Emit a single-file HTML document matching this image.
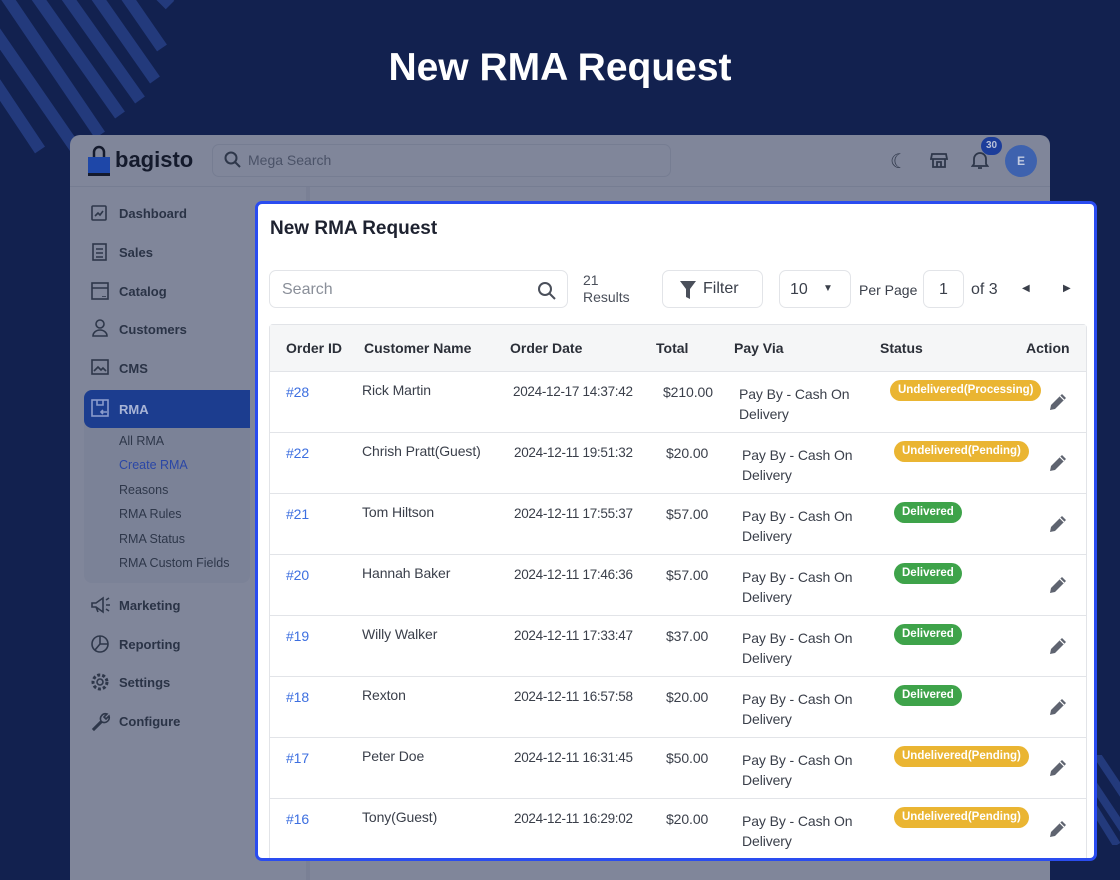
<!DOCTYPE html>
<html><head><meta charset="utf-8"><style>
*{box-sizing:border-box;margin:0;padding:0}
html,body{width:1120px;height:880px;overflow:hidden}
body{background:#12214f;font-family:"Liberation Sans",sans-serif;position:relative}
.abs{position:absolute}
h1{position:absolute;left:0;width:1120px;top:46px;text-align:center;color:#fff;font:bold 39px "Liberation Sans",sans-serif}
.panel{left:70px;top:135px;width:980px;height:745px;background:#80869a;border-radius:10px 10px 0 0;overflow:hidden}
.nav{font-size:13px;font-weight:bold;color:#2a3346}
.sub{font-size:12.5px;color:#2e374a}
.modal{left:255px;top:201px;width:842px;height:660px;background:#fff;border:3px solid #2a4cf0;border-radius:7px;overflow:hidden}
.t{font-size:14px;color:#3a3f4a;letter-spacing:-0.1px}
.hd{font-size:14px;font-weight:bold;color:#2b2f38}
.badge{position:absolute;height:21px;border-radius:11px;color:#fff;font-size:11.5px;font-weight:bold;line-height:21px;padding:0 8px;white-space:nowrap}
.y{background:#eab532}.g{background:#3ea34a}
.box{position:absolute;border:1px solid #e2e4e8;border-radius:7px;background:#fff}
</style></head><body>
<svg class="abs" style="left:0;top:0" width="320" height="170">
<g stroke="#233a7c" stroke-width="12">
<line x1="-20" y1="60" x2="40" y2="150"/><line x1="-20" y1="10" x2="80" y2="155"/><line x1="-5" y1="-20" x2="100" y2="135"/><line x1="25" y1="-20" x2="120" y2="115"/><line x1="55" y1="-20" x2="140" y2="100"/><line x1="85" y1="-20" x2="155" y2="80"/><line x1="115" y1="-20" x2="162" y2="48"/><line x1="145" y1="-20" x2="170" y2="5"/>
</g></svg>
<svg class="abs" style="left:1097px;top:755px" width="23" height="90"><g stroke="#233a7c" stroke-width="8"><line x1="0" y1="0" x2="40" y2="60"/><line x1="-10" y1="20" x2="30" y2="80"/><line x1="-5" y1="50" x2="20" y2="90"/></g></svg>
<h1>New RMA Request</h1>

<div class="abs panel">
 <svg class="abs" style="left:18px;top:10px" width="22" height="32"><path d="M6 12V7a5 5 0 0 1 10 0v5" stroke="#141a2c" stroke-width="2.5" fill="none"/><rect x="0" y="12" width="22" height="18" fill="#1e47a8"/><rect x="0" y="28" width="22" height="3" fill="#141a2c"/></svg>
 <div class="abs" style="left:45px;top:12px;font:bold 22px 'Liberation Sans',sans-serif;color:#141a2c">bagisto</div>
 <div class="abs" style="left:142px;top:9px;width:459px;height:33px;border:1px solid #767d92;border-radius:7px"></div>
 <svg class="abs" style="left:154px;top:16px" width="18" height="18"><circle cx="7" cy="7" r="5.5" stroke="#2e374a" stroke-width="2" fill="none"/><line x1="11" y1="11" x2="16" y2="16" stroke="#2e374a" stroke-width="2"/></svg>
 <div class="abs" style="left:178px;top:17px;font-size:14px;color:#4a5267">Mega Search</div>
 <div class="abs" style="left:820px;top:14px;font-size:20px;color:#2e374a">☾</div>
 <svg class="abs" style="left:860px;top:16px" width="18" height="18"><path d="M2 3h14l1 5H1zM3 8v8h12V8M7 16v-5h4v5" stroke="#2e374a" stroke-width="1.8" fill="none"/></svg>
 <svg class="abs" style="left:901px;top:15px" width="18" height="20"><path d="M3 14V9a6 6 0 0 1 12 0v5l1.5 2h-15zM7 18h4" stroke="#2e374a" stroke-width="1.8" fill="none"/></svg>
 <div class="abs" style="left:911px;top:2px;width:21px;height:18px;border-radius:9px;background:#1c3d9a;color:#b8c1d8;font-size:10px;font-weight:bold;text-align:center;line-height:18px">30</div>
 <div class="abs" style="left:935px;top:10px;width:32px;height:32px;border-radius:50%;background:#3e62ae;color:#c2cbe0;font-size:12px;font-weight:bold;text-align:center;line-height:32px">E</div>
 <div class="abs" style="left:0;top:51px;width:980px;height:1px;background:#767d92"></div>
 <div class="abs" style="left:236px;top:52px;width:4px;height:700px;background:#7a8095"></div>
 <div class="abs nav" style="left:49px;top:71px">Dashboard</div>
 <div class="abs nav" style="left:49px;top:110px">Sales</div>
 <div class="abs nav" style="left:49px;top:149px">Catalog</div>
 <div class="abs nav" style="left:49px;top:187px">Customers</div>
 <div class="abs nav" style="left:49px;top:226px">CMS</div>
 <svg class="abs" style="left:20px;top:68px" width="20" height="180" fill="none" stroke="#2e374a" stroke-width="1.6"><rect x="2" y="3" width="14" height="14" rx="1"/><path d="M5 13l3-3 2 2 3-4"/><rect x="3" y="41" width="13" height="16"/><path d="M6 46h7M6 50h7M6 54h7"/><rect x="2" y="80" width="16" height="16"/><path d="M2 85h16M13 93v1M15 93v1"/><circle cx="10" cy="121" r="4"/><path d="M3 133a7 6 0 0 1 14 0z"/><rect x="2" y="157" width="16" height="14"/><path d="M4 168l4-4 3 3 2-2 3 3"/></svg>
 <div class="abs" style="left:14px;top:255px;width:166px;height:193px;background:#7b8297;border-radius:8px"></div>
 <div class="abs" style="left:14px;top:255px;width:166px;height:38px;background:#1c3d8f;border-radius:8px 0 0 8px"></div>
 <svg class="abs" style="left:20px;top:263px" width="20" height="20" fill="none" stroke="#8a9bcc" stroke-width="1.6"><rect x="2" y="2" width="16" height="16"/><path d="M7 2v5h6V2M11 14h6M13 12l-2 2 2 2"/></svg>
 <div class="abs nav" style="left:49px;top:267px;color:#a9b5d6">RMA</div>
 <div class="abs sub" style="left:49px;top:299px">All RMA</div>
 <div class="abs sub" style="left:49px;top:323px;color:#2b47a6">Create RMA</div>
 <div class="abs sub" style="left:49px;top:348px">Reasons</div>
 <div class="abs sub" style="left:49px;top:372px">RMA Rules</div>
 <div class="abs sub" style="left:49px;top:397px">RMA Status</div>
 <div class="abs sub" style="left:49px;top:421px">RMA Custom Fields</div>
 <div class="abs nav" style="left:49px;top:463px">Marketing</div>
 <div class="abs nav" style="left:49px;top:502px">Reporting</div>
 <div class="abs nav" style="left:49px;top:540px">Settings</div>
 <div class="abs nav" style="left:49px;top:579px">Configure</div>
 <svg class="abs" style="left:20px;top:460px" width="22" height="140" fill="none" stroke="#2e374a" stroke-width="1.6"><path d="M2 8h4l7-5v14l-7-5H2zM6 12l2 5M16 5l3-2M16 10h4M16 14l3 2"/><circle cx="10" cy="49" r="8"/><path d="M10 41v8h8M10 49l-5 6"/><circle cx="10" cy="87" r="3"/><circle cx="10" cy="87" r="7" stroke-dasharray="3 2" stroke-width="3"/><path d="M3 134l8-8a5 5 0 0 1 6-7l-3 3 2 2 3-3a5 5 0 0 1-7 6l-8 8z"/></svg>
</div>

<div class="abs modal">
 <div class="abs" style="left:12px;top:14px;font-size:19px;font-weight:bold;color:#1e2230">New RMA Request</div>
 <div class="box" style="left:11px;top:66px;width:299px;height:38px"></div>
 <div class="abs" style="left:24px;top:77px;font-size:16px;color:#8a8f99">Search</div>
 <svg class="abs" style="left:279px;top:77px" width="20" height="20"><circle cx="8" cy="8" r="6" stroke="#4a4f5a" stroke-width="2" fill="none"/><line x1="12.5" y1="12.5" x2="18" y2="18" stroke="#4a4f5a" stroke-width="2"/></svg>
 <div class="abs" style="left:325px;top:68px;font-size:14px;color:#4a4f5a;line-height:17px">21<br>Results</div>
 <div class="box" style="left:404px;top:66px;width:101px;height:38px"></div>
 <svg class="abs" style="left:421px;top:76px" width="18" height="20"><path d="M1 1h16l-6 8v10l-4-2V9z" fill="#4a4f5a"/></svg>
 <div class="abs" style="left:445px;top:76px;font-size:16px;color:#3a3f4a">Filter</div>
 <div class="box" style="left:521px;top:66px;width:72px;height:38px"></div>
 <div class="abs" style="left:532px;top:77px;font-size:16px;color:#3a3f4a">10</div>
 <div class="abs" style="left:565px;top:79px;font-size:10px;color:#3a3f4a">▼</div>
 <div class="abs" style="left:601px;top:78px;font-size:14px;color:#3a3f4a">Per Page</div>
 <div class="box" style="left:665px;top:66px;width:41px;height:38px"></div>
 <div class="abs" style="left:681px;top:77px;font-size:16px;color:#3a3f4a">1</div>
 <div class="abs" style="left:713px;top:77px;font-size:16px;color:#3a3f4a">of 3</div>
 <div class="abs" style="left:764px;top:79px;font-size:10px;color:#3a3f4a">◀</div>
 <div class="abs" style="left:805px;top:79px;font-size:10px;color:#3a3f4a">▶</div>
 <div class="abs" style="left:11px;top:120px;width:818px;height:560px;border:1px solid #e2e4e8;border-radius:4px"></div>
 <div class="abs" style="left:12px;top:121px;width:816px;height:47px;background:#f5f6f7;border-bottom:1px solid #e2e4e8"></div>
 <div class="abs hd" style="left:28px;top:136px">Order ID</div>
 <div class="abs hd" style="left:106px;top:136px">Customer Name</div>
 <div class="abs hd" style="left:252px;top:136px">Order Date</div>
 <div class="abs hd" style="left:398px;top:136px">Total</div>
 <div class="abs hd" style="left:476px;top:136px">Pay Via</div>
 <div class="abs hd" style="left:622px;top:136px">Status</div>
 <div class="abs hd" style="left:768px;top:136px">Action</div>
 <div id="rows"></div>
</div>
<script>
var d=[["#28","Rick Martin","2024-12-17 14:37:42","$210.00","Undelivered(Processing)","y"],
["#22","Chrish Pratt(Guest)","2024-12-11 19:51:32","$20.00","Undelivered(Pending)","y"],
["#21","Tom Hiltson","2024-12-11 17:55:37","$57.00","Delivered","g"],
["#20","Hannah Baker","2024-12-11 17:46:36","$57.00","Delivered","g"],
["#19","Willy Walker","2024-12-11 17:33:47","$37.00","Delivered","g"],
["#18","Rexton","2024-12-11 16:57:58","$20.00","Delivered","g"],
["#17","Peter Doe","2024-12-11 16:31:45","$50.00","Undelivered(Pending)","y"],
["#16","Tony(Guest)","2024-12-11 16:29:02","$20.00","Undelivered(Pending)","y"]];
var h="";
d.forEach(function(r,i){var t=168+i*61,f=i==0;
h+='<div class="abs" style="left:12px;top:'+(t+60)+'px;width:816px;height:1px;background:#e2e4e8"></div>';
h+='<div class="abs t" style="left:28px;top:'+(t+12)+'px;color:#3d6fe0">'+r[0]+'</div>';
h+='<div class="abs t" style="left:104px;top:'+(t+10)+'px">'+r[1]+'</div>';
h+='<div class="abs t" style="left:'+(f?255:256)+'px;top:'+(t+12)+'px;font-size:13.5px;letter-spacing:-0.3px">'+r[2]+'</div>';
h+='<div class="abs t" style="left:'+(f?405:408)+'px;top:'+(t+12)+'px">'+r[3]+'</div>';
h+='<div class="abs t" style="left:'+(f?481:484)+'px;top:'+(t+12)+'px;line-height:20px">Pay By - Cash On<br>Delivery</div>';
h+='<div class="badge '+r[5]+'" style="left:'+(f?632:636)+'px;top:'+(t+8)+'px">'+r[4]+'</div>';
h+='<svg class="abs" style="left:790px;top:'+(t+20)+'px" width="20" height="20"><path d="M2 18l1-5L14 2l4 4L7 17z" fill="#5f6470"/><path d="M12 4l4 4" stroke="#fff" stroke-width="1.2"/></svg>';
});
document.getElementById("rows").innerHTML=h;
</script>
</body></html>
